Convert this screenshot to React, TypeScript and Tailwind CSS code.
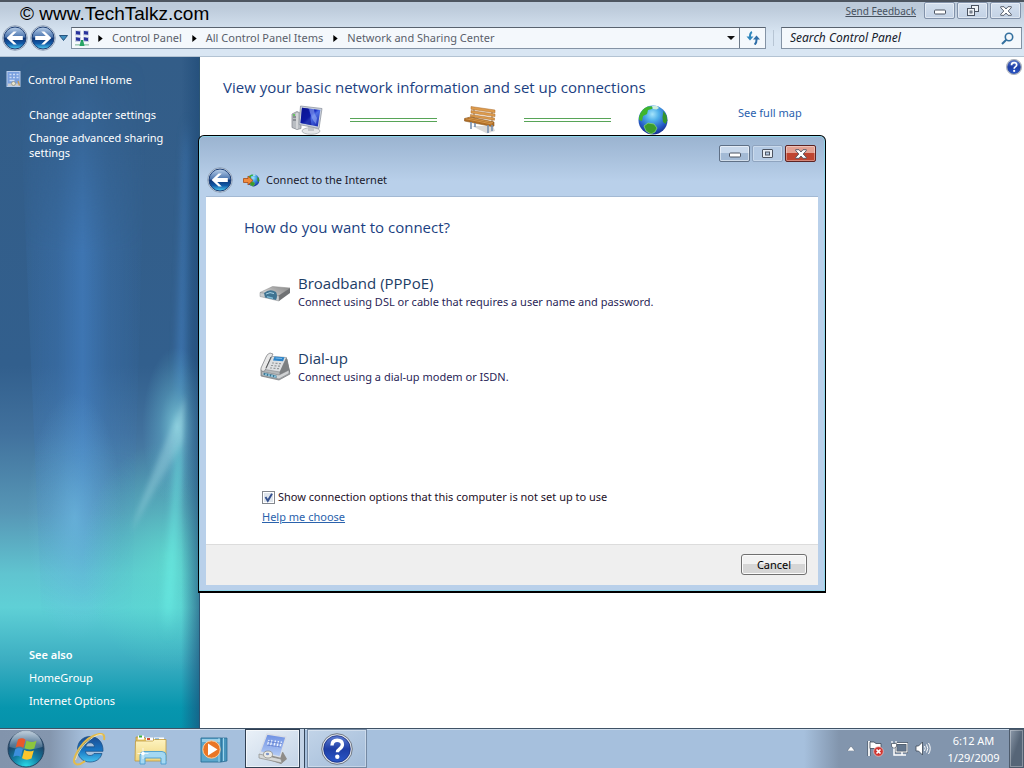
import React, { useState } from 'react';

interface TaskItem {
  label: string;
  icon: React.ReactNode;
}

function NavOrb({ id, forward }: { id: string; forward?: boolean }) {
  return (
    <svg viewBox="0 0 26 26" className="h-[26px] w-[26px]" aria-hidden="true">
      <defs>
        <linearGradient id={id} x1="0" y1="0" x2="0" y2="1">
          <stop offset="0" stopColor="#b9cfe9" />
          <stop offset="0.46" stopColor="#4a74ae" />
          <stop offset="0.5" stopColor="#0c3274" />
          <stop offset="0.75" stopColor="#125ba8" />
          <stop offset="1" stopColor="#4fd0f5" />
        </linearGradient>
      </defs>
      <circle cx="13" cy="13" r="12.3" fill="#dfe9f4" stroke="#7f90a8" strokeWidth="0.8" />
      <circle cx="13" cy="13" r="11" fill={`url(#${id})`} stroke="#1d3e74" strokeWidth="1" />
      <path
        d="M4.6 13 11.6 6.4h3.2l-4.6 4.7h10.6v3.8H10.2l4.6 4.7h-3.2z"
        fill="#fff"
        transform={forward ? 'matrix(-1 0 0 1 26 0)' : undefined}
      />
    </svg>
  );
}

function Crumb({ children }: { children: string }) {
  return (
    <>
      <svg viewBox="0 0 5 8" className="mr-[9px] ml-[10px] h-[7px] w-[5px] shrink-0" aria-hidden="true">
        <path d="M0 0 5 4 0 8z" fill="#000" />
      </svg>
      <a href="#" className="whitespace-nowrap text-[#5a5f6b]">
        {children}
      </a>
    </>
  );
}

function NetworkIcon() {
  return (
    <svg viewBox="0 0 16 17" className="-mr-[2px] h-[17px] w-4 shrink-0" aria-hidden="true">
      <rect x="1" y="0.5" width="6" height="5" fill="#c3cbe0" />
      <rect x="9" y="0.5" width="6" height="5" fill="#c3cbe0" />
      <rect x="1" y="6.8" width="6" height="5" fill="#c3cbe0" />
      <rect x="9" y="6.8" width="6" height="5" fill="#c3cbe0" />
      <path
        d="m2 1 4 .6v3.2L2 4.2zM10 1l4 .6v3.2l-4-.6zM2 7.300l4 .6v3.200l-4-.6zM10 7.300l4 .6v3.200l-4-.6z"
        fill="#27329c"
      />
      <path d="M8 10v4" stroke="#1e9e5c" strokeWidth="2.4" />
      <path d="M1 14.8h14" stroke="#a5cdb9" strokeWidth="1.6" />
      <path d="M5.500 16 6.500 12h3l1 4z" fill="#27a566" />
    </svg>
  );
}

function PanelIcon() {
  return (
    <svg viewBox="0 0 16 16" className="h-4 w-4 shrink-0" aria-hidden="true">
      <rect x="1" y="0.5" width="13" height="15" fill="#7aa0df" stroke="#b9cdea" />
      <path
        d="M3.500 3.500h2m1.500 0h2m1.500 0h2M3.500 6.500h2m1.500 0h2m1.500 0h2M3.500 9.500h5"
        stroke="#cbdcf6"
        strokeWidth="1.4"
      />
      <path d="M2 12.500h11v2.500H2z" fill="#c8ccd0" />
      <circle cx="7.5" cy="12.5" r="2" fill="#e9e6cf" stroke="#8d8d80" strokeWidth="0.7" />
      <path d="m12 10 1.500 4.500" stroke="#c79a55" strokeWidth="1.4" />
    </svg>
  );
}

function Aurora() {
  return (
    <svg
      viewBox="0 0 200 671"
      preserveAspectRatio="none"
      className="absolute inset-0 h-full w-full"
      aria-hidden="true"
    >
      <defs>
        <linearGradient id="seaBase" x1="0" y1="0" x2="0" y2="1">
          <stop offset="0" stopColor="#335d88" />
          <stop offset="0.46" stopColor="#325f8d" />
          <stop offset="0.56" stopColor="#41719d" />
          <stop offset="0.68" stopColor="#5797b6" />
          <stop offset="0.77" stopColor="#60c4d0" />
          <stop offset="0.82" stopColor="#5fd0d6" />
          <stop offset="0.9" stopColor="#3badc1" />
          <stop offset="0.97" stopColor="#0796ae" />
          <stop offset="1" stopColor="#0592ab" />
        </linearGradient>
        <linearGradient id="seaBeam" x1="0" y1="0" x2="1" y2="0">
          <stop offset="0" stopColor="#4482c8" stopOpacity="0" />
          <stop offset="0.1" stopColor="#4482c8" stopOpacity="0.14" />
          <stop offset="0.3" stopColor="#4482c8" stopOpacity="0.3" />
          <stop offset="0.5" stopColor="#4685cc" stopOpacity="0.6" />
          <stop offset="0.7" stopColor="#4482c8" stopOpacity="0.26" />
          <stop offset="1" stopColor="#4482c8" stopOpacity="0" />
        </linearGradient>
        <radialGradient id="seaBeamLow">
          <stop offset="0" stopColor="#78c8f0" stopOpacity="0.5" />
          <stop offset="0.5" stopColor="#74c3ee" stopOpacity="0.22" />
          <stop offset="1" stopColor="#74c3ee" stopOpacity="0" />
        </radialGradient>
        <linearGradient id="seaFade" x1="0" y1="0" x2="0" y2="1">
          <stop offset="0" stopColor="#fff" stopOpacity="0" />
          <stop offset="0.35" stopColor="#fff" />
          <stop offset="0.7" stopColor="#fff" />
          <stop offset="1" stopColor="#fff" stopOpacity="0" />
        </linearGradient>
        <mask id="seaMask">
          <rect width="200" height="560" fill="url(#seaFade)" />
        </mask>
        <radialGradient id="seaGreen">
          <stop offset="0" stopColor="#5ff0d0" stopOpacity="0.5" />
          <stop offset="0.5" stopColor="#55e4ca" stopOpacity="0.26" />
          <stop offset="1" stopColor="#4fdcc4" stopOpacity="0" />
        </radialGradient>
        <radialGradient id="seaGlow">
          <stop offset="0" stopColor="#8cdce6" stopOpacity="0.8" />
          <stop offset="0.5" stopColor="#6cc2d6" stopOpacity="0.35" />
          <stop offset="1" stopColor="#63b9d0" stopOpacity="0" />
        </radialGradient>
        <linearGradient id="seaEdge" x1="0" y1="0" x2="1" y2="0">
          <stop offset="0" stopColor="#1d4976" stopOpacity="0" />
          <stop offset="1" stopColor="#1d4976" stopOpacity="0.6" />
        </linearGradient>
        <filter id="seaSoft" x="-100%" y="-20%" width="300%" height="140%">
          <feGaussianBlur stdDeviation="4 12" />
        </filter>
        <filter id="seaRay" x="-50%" y="-20%" width="200%" height="140%">
          <feGaussianBlur stdDeviation="2 5" />
        </filter>
      </defs>
      <rect width="200" height="671" fill="url(#seaBase)" />
      <path d="M18 0H148L132 560H42z" fill="url(#seaBeam)" mask="url(#seaMask)" />
      <ellipse cx="75" cy="460" rx="48" ry="125" fill="url(#seaBeamLow)" />
      <ellipse cx="168" cy="500" rx="85" ry="115" fill="url(#seaGreen)" />
      <path d="M185 80h6L188 340H176z" fill="#4584c8" opacity="0.5" filter="url(#seaSoft)" />
      <ellipse cx="178" cy="370" rx="35" ry="80" fill="url(#seaGlow)" />
      <path d="M187 340Q160 395 131 475Q160 425 184 385z" fill="#a6dbe6" opacity="0.4" filter="url(#seaRay)" />
      <path d="M177 395H183L174 560H163z" fill="#6df4ea" opacity="0.5" filter="url(#seaSoft)" />
      <rect x="182" width="18" height="671" fill="url(#seaEdge)" />
    </svg>
  );
}

function ComputerIcon() {
  return (
    <svg viewBox="0 0 34 30" className="h-[30px] w-[34px]" aria-hidden="true">
      <defs>
        <linearGradient id="pcScreen" x1="0" y1="0" x2="1" y2="1">
          <stop offset="0" stopColor="#0a1290" />
          <stop offset="0.45" stopColor="#1428c0" />
          <stop offset="0.55" stopColor="#4f70e6" />
          <stop offset="1" stopColor="#101fa8" />
        </linearGradient>
      </defs>
      <path d="M2 9 7 6.500l4 2v15l-4 1-5-2z" fill="#b9bdc2" stroke="#8a8e94" strokeWidth="0.8" />
      <path d="M7 8v16" stroke="#efefef" />
      <path d="M3 12h3M3 15h3" stroke="#5c6168" />
      <circle cx="4" cy="10" r="1" fill="#4ec441" />
      <ellipse cx="21" cy="26" rx="9" ry="3.3" fill="#e4e6e8" stroke="#a5a9ae" strokeWidth="0.8" />
      <path d="m18 21 6 1v4h-6z" fill="#c3c6ca" />
      <path d="m10.500 1 21.500 2.500-3 20-20-4z" fill="#c9d0dc" stroke="#9298a2" strokeWidth="0.8" />
      <path d="m12 2.700 18.300 2.200-2.500 16.600-17.300-3.400z" fill="url(#pcScreen)" />
      <path d="m12 2.700 6 .7q3 8 3.500 16.800l-11-2.100z" fill="#0a1290" opacity="0.6" />
      <path d="m19 3.500 5 .6q0 5 3 9L26 19q-5-5-7-15.500z" fill="#9bb2f7" opacity="0.55" />
    </svg>
  );
}

function BenchIcon() {
  return (
    <svg viewBox="0 0 34 30" className="h-[30px] w-[34px]" aria-hidden="true">
      <path d="M9 21h21l2 5-8 2.500z" fill="#b9b9b9" opacity="0.55" />
      <path d="M11 2v11M29 5v12" stroke="#8b6a44" strokeWidth="1" />
      <g fill="#dd9b4c" stroke="#a96b2c" strokeWidth="0.5">
        <path d="m8 1.500 24 3.500v2.800L8 4.300z" />
        <path d="m8 5.500 24 3.500v2.600L8 8.100z" />
        <path d="m7.500 9.500 24 3.500v2.200l-24-3.500z" />
      </g>
      <path d="m1.500 13.500 6-1.500L31 17v4l-2 .5L1.500 16z" fill="#b06e26" stroke="#8b571e" strokeWidth="0.6" />
      <path d="m3 13.800 26 5.200M6 12.800l24 4.900" stroke="#dc9f54" strokeWidth="0.8" />
      <path d="M8 17v7M12 18v4M25 20v8M29 20v6" stroke="#7790b0" strokeWidth="1.6" />
    </svg>
  );
}

function GlobeShapes({ id }: { id: string }) {
  return (
    <>
      <defs>
        <radialGradient id={id} cx="0.48" cy="0.3" r="0.75">
          <stop offset="0" stopColor="#a5e4fb" />
          <stop offset="0.3" stopColor="#4fb0ea" />
          <stop offset="0.7" stopColor="#2458c4" />
          <stop offset="1" stopColor="#14247e" />
        </radialGradient>
      </defs>
      <circle cx="15" cy="15" r="14.5" fill={`url(#${id})`} />
      <path d="M1 12Q3 4 10 1.500l5 0-1 2.500-4 1-1 4-4 2-1 5-3-1z" fill="#3fb52c" />
      <path d="m14 1 5-.1 2 2-2.500 1.500L15 4z" fill="#cdeedd" />
      <path d="m25.500 6 3 4.500.8 5-1.800 3.500-2.500-2-.5-5z" fill="#35952a" />
      <path d="m6 21 4-3 6 1 3 4-2 4-4 2-5-3z" fill="#3c9c2c" stroke="#8fe07a" strokeWidth="0.7" />
    </>
  );
}

function ModemIcon() {
  return (
    <svg viewBox="0 0 32 32" className="h-8 w-8 shrink-0" aria-hidden="true">
      <defs>
        <linearGradient id="modemTop" x1="0" y1="0.5" x2="1" y2="0">
          <stop offset="0" stopColor="#d6d6d6" />
          <stop offset="0.5" stopColor="#a8a8a8" />
          <stop offset="1" stopColor="#8a8a8a" />
        </linearGradient>
      </defs>
      <path d="m1 16.500 12.500-6L31 12l-11 8z" fill="url(#modemTop)" stroke="#8a8a8a" strokeWidth="0.5" />
      <path d="m19 20 12-8v5L20 25z" fill="#707274" />
      <path d="m1 16.500 19 3.500v5L1 20.500z" fill="#c9cdcf" stroke="#85898c" strokeWidth="0.5" />
      <path d="M5 17q6-5 12-1 2 4 0 8L6 21.500z" fill="#3f7391" />
      <path d="M7 18q4-2.500 8-.5" stroke="#a9d5e8" strokeWidth="1" fill="none" />
      <path d="m8 20 6 1.500V23l-6-1.500z" fill="#7ab8d4" />
    </svg>
  );
}

function FaxIcon() {
  return (
    <svg viewBox="0 0 32 32" className="h-8 w-8 shrink-0" aria-hidden="true">
      <path d="m2 19 6-12 20 1 3 15-11 6-18-4z" fill="#b4b7b9" stroke="#707376" strokeWidth="0.7" />
      <path d="m8 5 19.500 1.500L21 21 3 18z" fill="#dddfe1" stroke="#868a8d" strokeWidth="0.6" />
      <path d="m27.500 6.500 3.500 14-10 6-.5-5z" fill="#7d8082" />
      <path d="m14 3-3-1q-3 1-4 4L2 17q-1 3 2 3.500 2 0 3-3L12.500 6z" fill="#e8e8e8" stroke="#77797c" strokeWidth="0.7" />
      <path d="m12 6-5 11" stroke="#55585a" strokeWidth="1" />
      <path d="m15.500 5.500 10 .8-1.500 4-10-.8z" fill="#2e84c8" />
      <path d="m16.500 7 6.500.5" stroke="#8fc7ef" strokeWidth="0.8" />
      <path
        d="M13 12h2m1.500.3h2m1.500.3h2M12 14.500h2m1.500.3h2m1.500.3h2M11 17h2m1.500.3h2m1.500.3h2"
        stroke="#96999c"
        strokeWidth="1.2"
      />
      <path d="m3 20.500 17 3.500 10-5v3.500L20 28 3 24.500z" fill="#d0d2d3" stroke="#6e7174" strokeWidth="0.5" />
      <path d="m4.500 21.500 13 3v2.500l-13-3z" fill="#3d7693" />
      <path d="M7 22.500v2m3-1.300v2m3-1.300v2m3-1.300v2" stroke="#a3dcf2" strokeWidth="1.4" />
    </svg>
  );
}

function StartOrb() {
  return (
    <svg viewBox="0 0 38 38" className="h-[38px] w-[38px]" aria-hidden="true">
      <defs>
        <radialGradient id="orbGlow" cx="0.5" cy="1" r="0.95">
          <stop offset="0" stopColor="#2ce0ec" />
          <stop offset="0.4" stopColor="#137fa3" />
          <stop offset="0.75" stopColor="#1c4569" />
          <stop offset="1" stopColor="#51708e" />
        </radialGradient>
        <linearGradient id="orbShine" x1="0" y1="0" x2="0" y2="1">
          <stop offset="0" stopColor="#dce7f0" stopOpacity="0.8" />
          <stop offset="1" stopColor="#a9c2d6" stopOpacity="0.25" />
        </linearGradient>
      </defs>
      <circle cx="19" cy="19" r="18" fill="url(#orbGlow)" stroke="#213d59" strokeWidth="0.9" />
      <path d="M2.500 17a16.500 16.500 0 0 1 33 0Q19 22 2.500 17z" fill="url(#orbShine)" />
      <path d="M11 9.500q4-2.500 7.500.2L16.300 18q-3.800-2.600-7.600-.4z" fill="#e8582b" />
      <path d="M19.500 10.500q4.500 2.700 10 .2L27.300 18.500q-5 2-9.800-.2z" fill="#8cc63e" />
      <path d="M8.200 19.200q3.800-2.300 7.700-.1l-2.200 8q-3.600-2.400-7.500-.2z" fill="#3c8fdc" />
      <path d="M17.200 20q4.700 2.500 9.600.4L24.500 28.500q-5 2.400-9.500-.3z" fill="#fcc62b" />
    </svg>
  );
}

function IeIcon() {
  return (
    <svg viewBox="0 0 34 34" className="h-[34px] w-[34px]" aria-hidden="true">
      <defs>
        <linearGradient id="ieBlue" x1="0" y1="0" x2="0" y2="1">
          <stop offset="0" stopColor="#1c4b91" />
          <stop offset="0.55" stopColor="#1876c4" />
          <stop offset="1" stopColor="#45c2ee" />
        </linearGradient>
      </defs>
      <path
        d="M18 4.500C10.500 4.500 5.500 10 5.500 17.500S10.500 30 18 30c6 0 10.500-3 12-8.500h-8c-1 1.500-2.300 2-4 2-2.700 0-4.300-1.500-4.500-4.200H31C31.500 10.500 26 4.500 18 4.500zM13.700 14.800c.4-2.600 2-4 4.500-4s4 1.400 4.300 4z"
        fill="url(#ieBlue)"
        stroke="#174a80"
        strokeWidth="0.7"
      />
      <path
        d="M32 8Q33.500 1 27 2 16 4 7.500 16-2 31 5 32.500q4 0 8-3.500"
        fill="none"
        stroke="#e3bb4c"
        strokeWidth="2"
      />
      <path d="M30.500 3Q26 1 17.500 8 7 16 3.500 28" fill="none" stroke="#fbe9ae" strokeWidth="0.9" />
    </svg>
  );
}

function FolderIcon() {
  return (
    <svg viewBox="0 0 34 34" className="h-[34px] w-[34px]" aria-hidden="true">
      <defs>
        <linearGradient id="folderFill" x1="0" y1="0" x2="0" y2="1">
          <stop offset="0" stopColor="#fdf3c0" />
          <stop offset="1" stopColor="#efd57c" />
        </linearGradient>
      </defs>
      <path d="M2 5h8l2 2h17l2 1v20H2z" fill="#e7c765" stroke="#b28f36" strokeWidth="0.7" />
      <rect x="4" y="3.5" width="6" height="4" fill="#fff" />
      <rect x="5" y="3.5" width="3" height="2" fill="#3bb143" />
      <rect x="12" y="5.5" width="7" height="4" fill="#fff" />
      <rect x="13" y="6" width="3" height="2" fill="#cf4a33" />
      <rect x="20" y="5.5" width="10" height="4" fill="#fff" />
      <rect x="21" y="6.5" width="4" height="2" fill="#3b8fd0" />
      <path d="M1.500 9h17l2-1.500h11.500V29h-31z" fill="url(#folderFill)" stroke="#c09b3f" strokeWidth="0.8" />
      <path d="M6 32V23.500q0-4 4-4h18q4 0 4 4V32h-5v-6H11v6z" fill="#a4d8f2" stroke="#4a9cce" strokeWidth="0.9" />
      <path d="M9 16v11M3.500 21.500h11" stroke="#fff" strokeWidth="0.7" />
      <circle cx="9" cy="21.5" r="1.8" fill="#fff" />
    </svg>
  );
}

function PlayerIcon() {
  return (
    <svg viewBox="0 0 34 34" className="h-[34px] w-[34px]" aria-hidden="true">
      <path d="M25 6h6v23l-6 1z" fill="#4895bd" stroke="#22658c" strokeWidth="0.7" />
      <path d="M27.500 6v23" stroke="#a9dcf2" strokeWidth="0.9" />
      <path d="M5 6h20v24H5z" fill="#5aa6cc" stroke="#2b6f96" strokeWidth="0.9" />
      <path d="M6 7h18v3H6z" fill="#b5e0f2" opacity="0.7" />
      <path d="M23 6v24" stroke="#a9dcf2" strokeWidth="0.9" />
      <circle cx="15.5" cy="17.5" r="8.7" fill="#ea7626" stroke="#fbd0a2" strokeWidth="1" />
      <path d="m12 11.500 9.500 6-9.500 6z" fill="#fff" />
    </svg>
  );
}

function ControlPanelIcon() {
  return (
    <svg viewBox="0 0 34 34" className="h-[34px] w-[34px]" aria-hidden="true">
      <defs>
        <linearGradient id="cpFace" x1="0" y1="0" x2="0" y2="1">
          <stop offset="0" stopColor="#6c8fe2" />
          <stop offset="1" stopColor="#b6cdf6" />
        </linearGradient>
      </defs>
      <path d="M4 25 25 32l6-5-4-7z" fill="#8f8c88" />
      <path d="m11 2 19 3-6 20L4 20z" fill="url(#cpFace)" stroke="#d8dde6" strokeWidth="1.3" />
      <path
        d="m13 8-1.500 5M16 8l-1.500 6M19.500 8.500 18 14m4.500-5L21 15m4.500-5.500L24 15"
        stroke="#eef4ff"
        strokeWidth="1.2"
      />
      <path d="m12 9.500 14 2M11 13l14 2" stroke="#3f60bd" strokeWidth="0.6" />
      <path d="m3 22 22 5 1 4-23-5z" fill="#d6d8d8" stroke="#8c8c8a" strokeWidth="0.7" />
      <ellipse cx="12" cy="22.5" rx="4.5" ry="3.5" fill="#ecebe6" stroke="#87857e" strokeWidth="0.7" />
      <ellipse cx="11.5" cy="22" rx="1.7" ry="1.3" fill="#7f97c8" />
    </svg>
  );
}

function HelpIcon({ id, className }: { id: string; className: string }) {
  return (
    <svg viewBox="0 0 32 32" className={className} aria-hidden="true">
      <defs>
        <linearGradient id={id} x1="0" y1="0" x2="0" y2="1">
          <stop offset="0" stopColor="#5c7cd2" />
          <stop offset="0.5" stopColor="#1e3ea6" />
          <stop offset="1" stopColor="#2b58c8" />
        </linearGradient>
      </defs>
      <circle cx="16" cy="16" r="15.3" fill="#dfe3ea" stroke="#707884" strokeWidth="1" />
      <circle cx="16" cy="16" r="13.3" fill={`url(#${id})`} stroke="#182f80" strokeWidth="0.8" />
      <path
        d="M11 12.500q0-5.200 5.200-5.200t5.200 4.300q0 2.400-2.700 4.200-2.300 1.500-2.300 3.500"
        fill="none"
        stroke="#fff"
        strokeWidth="3.4"
      />
      <circle cx="16.3" cy="23.8" r="2.2" fill="#fff" />
    </svg>
  );
}

const quickLaunch: TaskItem[] = [
  { label: 'Internet Explorer', icon: <IeIcon /> },
  { label: 'Windows Explorer', icon: <FolderIcon /> },
  { label: 'Windows Media Player', icon: <PlayerIcon /> },
];

const mainButton =
  'flex h-[17px] w-[31px] items-center justify-center rounded-[2px] border border-[#8292aa] bg-linear-to-b from-[#d3dfee] to-[#c3d2e5] shadow-[inset_0_0_0_1px_rgba(255,255,255,0.45)]';

function CloseGlyph() {
  return (
    <svg viewBox="0 0 12 10" className="h-[10px] w-3" aria-hidden="true">
      <path
        d="M0.700 0.700h3.300L6 3l2-2.300h3.300v1L8.200 5l3.100 3.300v1H8L6 7 4 9.300H.7v-1L3.800 5 .7 1.700z"
        fill="#fff"
        stroke="#4c5462"
        strokeWidth="0.9"
      />
    </svg>
  );
}

function TitleBar() {
  return (
    <header className="flex h-[57px] shrink-0 flex-col border-t-2 border-b border-t-[#4d5560] border-b-[#b3c3d3] bg-linear-to-b from-[#bccada] from-10% to-[#d9e6f3] to-60% px-[2px]">
      <div className="flex h-[23px] items-start">
        <span className="pl-[18px] font-['Liberation_Sans',sans-serif] text-[19px] leading-6 text-black">
          © www.TechTalkz.com
        </span>
        <div className="ml-auto flex items-start gap-[2px] pr-px">
          <a href="#" className="mr-[6px] text-[10px] leading-[19px] text-[#47525f] underline">
            Send Feedback
          </a>
          <button type="button" aria-label="Minimize" className={mainButton}>
            <svg viewBox="0 0 12 6" className="mt-[3px] h-[6px] w-3" aria-hidden="true">
              <rect x="0.5" y="1" width="11" height="4" rx="1" fill="#fff" stroke="#4c5462" />
            </svg>
          </button>
          <button type="button" aria-label="Restore" className={mainButton}>
            <svg viewBox="0 0 12 11" className="h-[11px] w-3" aria-hidden="true">
              <rect x="4.5" y="0.5" width="7" height="6" fill="#eef2f7" stroke="#4c5462" />
              <rect x="0.5" y="3.5" width="7" height="7" fill="#eef2f7" stroke="#4c5462" />
              <rect x="3" y="6" width="2" height="2" fill="#c9d5e4" stroke="#4c5462" strokeWidth="0.8" />
            </svg>
          </button>
          <button type="button" aria-label="Close" className={mainButton}>
            <CloseGlyph />
          </button>
        </div>
      </div>
      <div className="flex items-center">
        <button type="button" aria-label="Back">
          <NavOrb id="navBack" />
        </button>
        <button type="button" aria-label="Forward" className="ml-[2px]">
          <NavOrb id="navForward" forward />
        </button>
        <button type="button" aria-label="Recent pages" className="ml-[3px]">
          <svg viewBox="0 0 9 6" className="h-[6px] w-[9px]" aria-hidden="true">
            <path d="M0.500 0.500h8l-4 5z" fill="#3f8fc0" stroke="#1c4a76" strokeWidth="0.9" />
          </svg>
        </button>
        <div className="ml-[3px] flex h-[22px] grow border border-[#8493a5] border-t-[#59636f] bg-[#f4f8fc]">
          <nav className="flex grow items-center pl-[2px] text-[11px] leading-4">
            <NetworkIcon />
            <Crumb>Control Panel</Crumb>
            <Crumb>All Control Panel Items</Crumb>
            <Crumb>Network and Sharing Center</Crumb>
          </nav>
          <button type="button" aria-label="Previous locations" className="flex w-4 items-center justify-center">
            <svg viewBox="0 0 8 4" className="h-1 w-2" aria-hidden="true">
              <path d="M0 0h8L4 4z" fill="#111" />
            </svg>
          </button>
          <button
            type="button"
            aria-label="Refresh"
            className="flex w-[26px] items-center justify-center border-l border-[#6d7a89]"
          >
            <svg viewBox="0 0 14 14" className="h-[14px] w-[14px]" aria-hidden="true">
              <path d="M6 1Q3.800 2 4 6.500" fill="none" stroke="#2f86bc" strokeWidth="2" />
              <path d="m0.500 5.500h7L4 9.500z" fill="#2f86bc" />
              <path d="M8.500 13.500q2.200-1 2-5.500" fill="none" stroke="#2f6ea8" strokeWidth="2" />
              <path d="M7 8.500h7l-3.500-4z" fill="#2f6ea8" />
            </svg>
          </button>
        </div>
        <span className="mx-[7px] h-4 w-px bg-[#b7c5d4]" />
        <label className="flex h-[22px] w-[241px] items-center border border-[#8493a5] border-t-[#59636f] bg-[#f4f8fc] pr-[7px] pl-2">
          <input
            type="text"
            aria-label="Search Control Panel"
            placeholder="Search Control Panel"
            className="w-0 grow bg-transparent text-xs italic outline-none placeholder:text-[#16202c] placeholder:opacity-100"
          />
          <svg viewBox="0 0 13 13" className="h-[13px] w-[13px] shrink-0" aria-hidden="true">
            <circle cx="8" cy="5" r="3.7" fill="none" stroke="#33709f" strokeWidth="1.6" />
            <path d="M5.300 7.700 1 12" stroke="#33709f" strokeWidth="2" />
          </svg>
        </label>
      </div>
    </header>
  );
}

function Sidebar() {
  return (
    <aside className="relative w-[200px] shrink-0 border-r border-[#2c5573] text-[11px] leading-[15px] text-white">
      <Aurora />
      <div className="relative flex h-full flex-col pt-[14px] pb-5 pl-[29px]">
        <a href="#" className="-ml-[23px] flex items-center gap-[6px]">
          <PanelIcon />
          Control Panel Home
        </a>
        <nav className="mt-5 flex flex-col gap-2 pr-5">
          <a href="#">Change adapter settings</a>
          <a href="#">Change advanced sharing settings</a>
        </nav>
        <nav className="mt-auto flex flex-col gap-2">
          <h2 className="font-semibold">See also</h2>
          <a href="#">HomeGroup</a>
          <a href="#">Internet Options</a>
        </nav>
      </div>
    </aside>
  );
}

function Link() {
  return <div className="h-1 w-[87px] border-y border-[#57a457]" />;
}

function NetworkMap() {
  return (
    <main className="relative grow bg-white pt-[19px] pl-[23px]">
      <button type="button" aria-label="Help" className="absolute top-[2px] right-[2px]">
        <HelpIcon id="helpSmall" className="h-4 w-4" />
      </button>
      <h1 className="font-['Open_Sans',sans-serif] text-[15px] leading-[22px] text-[#1b3f82]">
        View your basic network information and set up connections
      </h1>
      <div className="mt-[7px] flex items-start pl-[67px]">
        <ComputerIcon />
        <div className="mx-[26px] mt-[13px]">
          <Link />
        </div>
        <BenchIcon />
        <div className="mx-[27px] mt-[13px]">
          <Link />
        </div>
        <svg viewBox="0 0 30 30" className="h-[30px] w-[30px]" aria-hidden="true">
          <GlobeShapes id="mapGlobe" />
        </svg>
        <a href="#" className="ml-[70px] text-[11px] leading-[15px] text-[#2a5fae]">
          See full map
        </a>
      </div>
    </main>
  );
}

function Choice({ icon, title, detail }: { icon: React.ReactNode; title: string; detail: string }) {
  return (
    <button type="button" className="flex items-center gap-[7px] text-left">
      {icon}
      <span className="flex flex-col">
        <span className="font-['Open_Sans',sans-serif] text-[15px] leading-5 text-[#1c3d66]">{title}</span>
        <span className="text-[11px] leading-[18px] text-[#2a1f57]">{detail}</span>
      </span>
    </button>
  );
}

function ConnectDialog() {
  const [showAll, setShowAll] = useState(true);

  return (
    <section
      role="dialog"
      aria-label="Connect to the Internet"
      className="absolute top-[135px] left-[198px] flex h-[458px] w-[628px] flex-col rounded-t-md border border-b-2 border-black bg-[#b9d1ea] bg-linear-to-b from-[#9ab3d0] to-[#b9d0ea] to-10% px-[7px] pb-[6px] shadow-[inset_0_0_0_1px_rgba(140,215,235,0.9)]"
    >
      <div className="flex h-[61px] shrink-0 flex-col border-b border-[#a3b9d3]">
        <div className="mt-[9px] flex justify-end gap-[2px] pr-[2px]">
          <button
            type="button"
            aria-label="Minimize"
            className="flex h-[17px] w-[31px] items-center justify-center rounded-[2px] border border-[#5f7086] bg-linear-to-b from-[#c9d9ec] from-45% to-[#a3bad5] to-50% shadow-[inset_0_0_0_1px_rgba(255,255,255,0.5)]"
          >
            <svg viewBox="0 0 12 6" className="mt-[3px] h-[6px] w-3" aria-hidden="true">
              <rect x="0.5" y="1" width="11" height="4" rx="1" fill="#fff" stroke="#4c5462" />
            </svg>
          </button>
          <button
            type="button"
            aria-label="Maximize"
            className="flex h-[17px] w-[31px] items-center justify-center rounded-[2px] border border-[#8fa4bf] bg-[#b4cae4] shadow-[inset_0_0_0_1px_rgba(255,255,255,0.3)]"
          >
            <svg viewBox="0 0 11 9" className="h-[9px] w-[11px]" aria-hidden="true">
              <rect x="0.5" y="0.5" width="10" height="8" rx="0.5" fill="#e8eef5" stroke="#4c5462" />
              <rect x="3.5" y="3" width="4" height="3" fill="#b4cae4" stroke="#4c5462" />
            </svg>
          </button>
          <button
            type="button"
            aria-label="Close"
            className="flex h-[17px] w-[31px] items-center justify-center rounded-[2px] border border-[#5c2323] bg-linear-to-b from-[#e3a193] from-45% to-[#bf4531] to-50% shadow-[inset_0_0_0_1px_rgba(255,255,255,0.35)]"
          >
            <CloseGlyph />
          </button>
        </div>
        <div className="mt-[5px] flex items-center pl-[1px]">
          <button type="button" aria-label="Back">
            <NavOrb id="dialogBack" />
          </button>
          <svg viewBox="0 0 17 14" className="ml-[10px] h-[14px] w-[17px]" aria-hidden="true">
            <g transform="translate(4 1) scale(0.42)">
              <GlobeShapes id="dialogGlobe" />
            </g>
            <path d="M0.500 5.500H5V3l5 4.500L5 12V9.500H.5z" fill="#f08a3c" stroke="#a84c18" strokeWidth="0.8" />
          </svg>
          <span className="ml-[6px] text-[11px] leading-4 text-[#1a1a2c]">Connect to the Internet</span>
        </div>
      </div>
      <div className="flex grow flex-col bg-white pt-[19px] pl-[38px]">
        <h2 className="font-['Open_Sans',sans-serif] text-[15px] leading-[22px] text-[#1b3f82]">
          How do you want to connect?
        </h2>
        <div className="mt-[35px] flex flex-col items-start gap-[37px] pl-[15px]">
          <Choice
            icon={<ModemIcon />}
            title="Broadband (PPPoE)"
            detail="Connect using DSL or cable that requires a user name and password."
          />
          <Choice icon={<FaxIcon />} title="Dial-up" detail="Connect using a dial-up modem or ISDN." />
        </div>
        <div className="mt-auto mb-[19px] flex flex-col items-start gap-1 pl-[18px] text-[11px] leading-4">
          <label className="flex items-center gap-[3px] text-[#1d1028]">
            <span className="relative flex h-[13px] w-[13px]">
              <input
                type="checkbox"
                checked={showAll}
                onChange={(e) => setShowAll(e.target.checked)}
                className="h-[13px] w-[13px] appearance-none border border-[#84888e] bg-[#dfe5ec] shadow-[inset_0_0_0_1px_#fff]"
              />
              {showAll && (
                <svg viewBox="0 0 13 13" className="pointer-events-none absolute inset-0" aria-hidden="true">
                  <path d="m3.500 6 2.300 3.800L10 2.800" fill="none" stroke="#35518f" strokeWidth="1.9" />
                </svg>
              )}
            </span>
            Show connection options that this computer is not set up to use
          </label>
          <a href="#" className="text-[#2a62ac] underline">
            Help me choose
          </a>
        </div>
      </div>
      <div className="flex h-[41px] shrink-0 items-start justify-end border-t border-[#dcdcdc] bg-[#efefef] pt-[9px] pr-[11px]">
        <button
          type="button"
          className="h-[21px] w-[66px] rounded-[3px] border border-[#707070] bg-linear-to-b from-[#f2f2f2] from-45% to-[#d6d6d6] to-50% text-[11px] leading-4 text-black shadow-[inset_0_0_0_1px_#fbfbfb]"
        >
          Cancel
        </button>
      </div>
    </section>
  );
}

function Taskbar() {
  return (
    <footer className="flex h-10 shrink-0 items-stretch border-t border-[#3f5266] bg-[#a6c0dd] bg-[linear-gradient(to_right,#8294ac_0,#8496ae_50px,#a6c0dd_85px,#a6c0dd_calc(100%-220px),#8295ad_calc(100%-185px),#8295ad_100%)] shadow-[inset_0_1px_0_#cfdeee]">
      <button type="button" aria-label="Start" className="mr-[27px] ml-[7px]">
        <StartOrb />
      </button>
      <div className="flex items-center gap-7">
        {quickLaunch.map((item) => (
          <button key={item.label} type="button" aria-label={item.label}>
            {item.icon}
          </button>
        ))}
      </div>
      <button
        type="button"
        aria-label="Control Panel"
        className="ml-[15px] flex w-[55px] items-center justify-center border border-[#2f3f52] bg-linear-to-br from-[#eaf1f8] to-[#c3d3e6] shadow-[inset_0_0_0_1px_rgba(255,255,255,0.6)]"
      >
        <ControlPanelIcon />
      </button>
      <span className="w-[5px] border-r border-[#34465a] bg-[#c3d3e6]" />
      <button
        type="button"
        aria-label="Help and Support"
        className="ml-[2px] flex w-[60px] items-center justify-center border border-[#7489a3] bg-linear-to-br from-[#c2d4e8] to-[#a3bcd9] shadow-[inset_0_0_0_1px_rgba(255,255,255,0.35)]"
      >
        <HelpIcon id="helpLarge" className="h-8 w-8" />
      </button>
      <div className="ml-auto flex items-center">
        <button type="button" aria-label="Show hidden icons" className="mr-3">
          <svg viewBox="0 0 8 5" className="h-[5px] w-2" aria-hidden="true">
            <path d="M4 0 8 5H0z" fill="#fff" stroke="#4a5a6e" strokeWidth="0.5" />
          </svg>
        </button>
        <svg viewBox="0 0 17 17" className="h-[17px] w-[17px]" aria-hidden="true">
          <path d="M2 1v15" stroke="#3c4856" strokeWidth="3" />
          <path d="M2 1v15" stroke="#fff" strokeWidth="1.8" />
          <path d="M3 2h4l2 1.500h5V10H9L7 8.500H3z" fill="#fff" stroke="#3c4856" strokeWidth="0.8" />
          <circle cx="11.5" cy="11.5" r="4.8" fill="#cf3430" stroke="#f3c9c6" strokeWidth="0.7" />
          <path d="m9.500 9.500 4 4m0-4-4 4" stroke="#fff" strokeWidth="1.7" />
        </svg>
        <svg viewBox="0 0 17 17" className="ml-[7px] h-[17px] w-[17px]" aria-hidden="true">
          <rect x="5" y="3.5" width="11" height="8.5" fill="#65788f" stroke="#2c3846" strokeWidth="2.2" />
          <rect x="5" y="3.5" width="11" height="8.5" fill="none" stroke="#fff" strokeWidth="1.2" />
          <path d="M7 15h8M11 12v3M3 7v8h4" stroke="#fff" strokeWidth="1.5" fill="none" />
          <path d="M1 1v2.500M5 1v2.500" stroke="#fff" strokeWidth="1.2" />
          <path d="M.5 3.500h5v3l-2 1.500h-1l-2-1.500z" fill="#fff" stroke="#2c3846" strokeWidth="0.6" />
        </svg>
        <svg viewBox="0 0 17 17" className="ml-[7px] h-[17px] w-[17px]" aria-hidden="true">
          <path d="M1 6h2.500L7.500 2v13L3.500 11H1z" fill="#fff" stroke="#3c4856" strokeWidth="0.8" />
          <path
            d="M9.500 6q1.500 2.500 0 5M11.500 4.500q2.500 4 0 8M13.500 3q3.500 5.500 0 11"
            stroke="#fff"
            strokeWidth="1"
            fill="none"
          />
        </svg>
        <div className="flex w-[77px] flex-col pl-[6px] text-center text-[11px] leading-[17px] text-white">
          <span>6:12 AM</span>
          <span>1/29/2009</span>
        </div>
      </div>
      <button
        type="button"
        aria-label="Show desktop"
        className="w-[15px] border border-[#4d5b6c] bg-linear-to-br from-[#8e9bab] to-[#566577] to-50% shadow-[inset_0_0_0_1px_rgba(255,255,255,0.3)]"
      />
    </footer>
  );
}

export default function App() {
  return (
    <div className="relative flex h-screen flex-col overflow-hidden bg-white font-['Noto_Sans','Open_Sans',sans-serif]">
      <TitleBar />
      <div className="flex min-h-0 grow">
        <Sidebar />
        <NetworkMap />
      </div>
      <ConnectDialog />
      <Taskbar />
    </div>
  );
}
